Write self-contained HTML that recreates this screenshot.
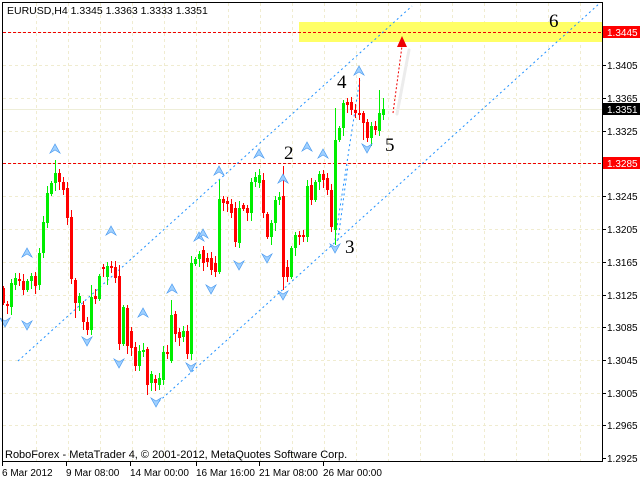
<!DOCTYPE html>
<html><head><meta charset="utf-8"><style>
body{margin:0;background:#fff;width:640px;height:480px;overflow:hidden;font-family:"Liberation Sans",sans-serif}
svg{position:absolute;left:0;top:0}
</style></head><body>
<svg id="s" width="640" height="480" xmlns="http://www.w3.org/2000/svg" font-family="Liberation Sans, sans-serif">
<rect x="0" y="0" width="640" height="480" fill="#fff"/>
<g id="grid" stroke="#f0ecd0" stroke-dasharray="3,3" stroke-width="1"></g>
<rect x="299" y="22" width="303" height="20" fill="#ffff66"/>
<line x1="3" y1="109.5" x2="602" y2="109.5" stroke="#eeeed8"/>
<line x1="3" y1="32.5" x2="602" y2="32.5" stroke="#e00" stroke-dasharray="3,2"/>
<line x1="3" y1="163.5" x2="602" y2="163.5" stroke="#e00" stroke-dasharray="3,2"/>
<g stroke="#1e90ff" stroke-dasharray="2,3" stroke-width="1">
<line x1="18" y1="361" x2="412" y2="6"/>
<line x1="155" y1="405" x2="600" y2="3"/>
<line x1="335" y1="240" x2="360" y2="78"/>
<line x1="338" y1="240" x2="348" y2="165"/>
</g>
<line x1="397" y1="114" x2="409" y2="50" stroke="#ececec" stroke-width="3" stroke-linecap="round"/>
<line x1="393" y1="113" x2="402" y2="46" stroke="#e00" stroke-dasharray="2,2"/>
<polygon points="402,36 397,47 407,47" fill="#e00"/>
<g id="c"></g>
<g id="f"></g>
<g font-family="Liberation Serif, serif" font-size="19" fill="#000">
<text x="284" y="159">2</text><text x="345" y="253">3</text><text x="337" y="88">4</text><text x="385" y="151">5</text><text x="549" y="27">6</text>
</g>
<rect x="2.5" y="2.5" width="600" height="459" fill="none" stroke="#000"/>
<text x="7" y="14" font-size="10.5">EURUSD,H4  1.3345 1.3363 1.3333 1.3351</text>
<text x="5" y="458" font-size="11">RoboForex - MetaTrader 4, © 2001-2012, MetaQuotes Software Corp.</text>
<g id="ax" font-size="10"></g>
<rect x="603" y="26" width="37" height="12" fill="#f00"/><text x="607" y="36" font-size="10" fill="#fff">1.3445</text>
<rect x="603" y="103" width="37" height="12" fill="#000"/><text x="607" y="113" font-size="10" fill="#fff">1.3351</text>
<rect x="603" y="157" width="37" height="12" fill="#f00"/><text x="607" y="167" font-size="10" fill="#fff">1.3285</text>
</svg>
<script>
var NS="http://www.w3.org/2000/svg";
function el(p,t,a,txt){var e=document.createElementNS(NS,t);for(var k in a)e.setAttribute(k,a[k]);if(txt)e.textContent=txt;document.getElementById(p).appendChild(e);return e;}
var prices=[["1.3405",65],["1.3365",98],["1.3325",131],["1.3245",196],["1.3205",229],["1.3165",262],["1.3125",295],["1.3085",327],["1.3045",360],["1.3005",393],["1.2965",425],["1.2925",458]];
[32,65,98,131,163,196,229,262,295,327,360,393,425].forEach(function(y){el("grid","line",{x1:3,y1:y+.5,x2:602,y2:y+.5});});
for(var x=36;x<602;x+=32)el("grid","line",{x1:x+.5,y1:3,x2:x+.5,y2:461});
prices.forEach(function(p){el("ax","line",{x1:602,y1:p[1]+.5,x2:606,y2:p[1]+.5,stroke:"#000"});el("ax","text",{x:607,y:p[1]+4},p[0]);});
[["6 Mar 2012",2],["9 Mar 08:00",66],["14 Mar 00:00",130],["16 Mar 16:00",196],["21 Mar 08:00",259],["26 Mar 00:00",323]].forEach(function(d){el("ax","line",{x1:d[1]+.5,y1:461,x2:d[1]+.5,y2:466,stroke:"#000"});el("ax","text",{x:d[1],y:476},d[0]);});
var C=[[3,288,303],[7,304,306],[11,307,283],[15,285,278],[19,279,281],[23,281,290],[27,290,281],[31,281,276],[35,276,286],[39,285,253],[43,253,222],[47,223,193],[51,194,183],[55,183,173],[59,173,182],[63,182,190],[67,188,218],[71,217,279],[75,280,303],[79,303,296],[83,305,322],[87,322,330],[91,330,297],[95,296,299],[99,299,276],[103,267,269],[107,277,266],[111,266,268],[115,267,278],[119,276,344],[123,344,307],[127,308,346],[131,331,348],[135,347,366],[139,366,351],[143,352,350],[147,349,385],[151,383,374],[155,379,383],[159,385,378],[163,380,352],[167,352,354],[171,361,315],[175,314,334],[179,332,338],[183,337,331],[187,331,354],[191,354,263],[195,264,259],[199,259,254],[203,250,263],[207,258,262],[211,258,270],[215,263,272],[219,272,199],[223,199,203],[227,201,204],[231,204,213],[235,208,242],[239,243,208],[243,205,209],[247,208,213],[251,213,182],[255,182,177],[259,183,175],[263,180,213],[267,214,237],[271,237,223],[275,223,200],[279,200,197],[283,196,277],[287,267,277],[291,277,248],[295,248,235],[299,235,237],[303,235,237],[307,237,186],[311,185,200],[315,200,182],[319,182,174],[323,174,180],[327,178,190],[331,190,227],[335,230,140],[339,140,128],[343,128,103],[347,102,105],[351,102,110],[355,110,113],[359,113,115],[363,113,123],[367,122,138],[371,138,126],[375,126,130],[379,131,113],[383,115,109]];
var HI={55:160,119:265,335:108,359:78,379:90,383:98,283:166,219:180,91:285,171:300};
var LO={75:318,147:395,335:245,119:350,283:290,363:140,367:142,191:360,67:225};
C.forEach(function(c,i){var x=c[0],o=c[1],cl=c[2];var top=Math.min(o,cl),bot=Math.max(o,cl);
var h=HI[x]||top-2-(i*7%6),l=LO[x]||bot+2-(-i*5%6)+ (i%3);
var col=cl<o?"#00ee00":"#ff0000";
el("c","line",{x1:x+.5,y1:h,x2:x+.5,y2:l,stroke:col});
el("c","rect",{x:x-1,y:top,width:3,height:Math.max(1,bot-top),fill:col});});
function arrow(x,y,up){var s=up?1:-1;
el("f","path",{d:"M"+x+","+(y-5*s)+" L"+(x-5)+","+(y+4*s)+" L"+x+","+(y+1*s)+" L"+(x+5)+","+(y+4*s)+" Z",fill:"#9fd0ff",stroke:"#4a9af0","stroke-width":"0.7"});}
[[55,149],[27,253],[111,231],[172,289],[143,313],[199,237],[219,171],[259,154],[283,179],[307,147],[323,154],[203,234],[359,71]].forEach(function(a){arrow(a[0],a[1],true);});
[[5,322],[27,325],[87,341],[119,363],[156,402],[191,367],[211,289],[239,265],[267,258],[283,295],[335,248],[367,148]].forEach(function(a){arrow(a[0],a[1],false);});
</script>
</body></html>
